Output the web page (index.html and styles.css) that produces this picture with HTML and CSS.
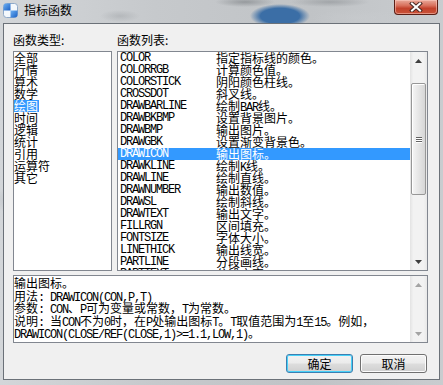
FILE: index.html
```html
<!DOCTYPE html>
<html lang="zh-CN">
<head>
  <meta charset="UTF-8">
  <title>指标函数</title>
  <link rel="stylesheet" href="styles.css">
</head>
<body>
  <div class="window">
    <div class="titlebar">
      <svg class="app-icon" width="15" height="15" viewBox="0 0 15 15">
        <defs>
          <linearGradient id="blue" x1="0" y1="0" x2="1" y2="1">
            <stop offset="0" stop-color="#6fb2f4"/>
            <stop offset="1" stop-color="#1a5fc4"/>
          </linearGradient>
        </defs>
        <rect x="0.5" y="0.5" width="14" height="14" rx="3" fill="#f4f8fc" stroke="#8fa9c8"/>
        <path d="M0.5 7.5 V3.5 A3 3 0 0 1 3.5 0.5 H7.5 V7.5 Z" fill="url(#blue)"/>
        <path d="M7.5 7.5 H14.5 V11.5 A3 3 0 0 1 11.5 14.5 H7.5 Z" fill="url(#blue)"/>
      </svg>
      <span class="title">指标函数</span>
      <div class="close-btn">
        <svg width="14" height="10" viewBox="0 0 14 10">
          <path d="M3 1.5 L11 8.5 M11 1.5 L3 8.5" stroke="#4a2a24" stroke-width="4" stroke-linecap="square"/>
          <path d="M3 1.5 L11 8.5 M11 1.5 L3 8.5" stroke="#fff" stroke-width="2" stroke-linecap="square"/>
        </svg>
      </div>
    </div>

    <div class="client">
      <div class="lists">
        <div class="col col-type">
          <div class="label">函数类型:</div>
          <div class="listbox type-list">
            <div class="item">全部</div>
            <div class="item">行情</div>
            <div class="item">算术</div>
            <div class="item">数学</div>
            <div class="item selected">绘图</div>
            <div class="item">时间</div>
            <div class="item">逻辑</div>
            <div class="item">统计</div>
            <div class="item">引用</div>
            <div class="item">运算符</div>
            <div class="item">其它</div>
          </div>
        </div>

        <div class="col col-func">
          <div class="label">函数列表:</div>
          <div class="listbox func-list">
            <div class="rows">
              <div class="row"><span class="name">COLOR</span><span class="desc">指定指标线的颜色。</span></div>
              <div class="row"><span class="name">COLORRGB</span><span class="desc">计算颜色值。</span></div>
              <div class="row"><span class="name">COLORSTICK</span><span class="desc">阴阳颜色柱线。</span></div>
              <div class="row"><span class="name">CROSSDOT</span><span class="desc">斜叉线。</span></div>
              <div class="row"><span class="name">DRAWBARLINE</span><span class="desc">绘制<span class="en">BAR</span>线。</span></div>
              <div class="row"><span class="name">DRAWBKBMP</span><span class="desc">设置背景图片。</span></div>
              <div class="row"><span class="name">DRAWBMP</span><span class="desc">输出图片。</span></div>
              <div class="row"><span class="name">DRAWGBK</span><span class="desc">设置渐变背景色。</span></div>
              <div class="row selected"><span class="name">DRAWICON</span><span class="desc">输出图标。</span></div>
              <div class="row"><span class="name">DRAWKLINE</span><span class="desc">绘制<span class="en">K</span>线。</span></div>
              <div class="row"><span class="name">DRAWLINE</span><span class="desc">绘制直线。</span></div>
              <div class="row"><span class="name">DRAWNUMBER</span><span class="desc">输出数值。</span></div>
              <div class="row"><span class="name">DRAWSL</span><span class="desc">绘制斜线。</span></div>
              <div class="row"><span class="name">DRAWTEXT</span><span class="desc">输出文字。</span></div>
              <div class="row"><span class="name">FILLRGN</span><span class="desc">区间填充。</span></div>
              <div class="row"><span class="name">FONTSIZE</span><span class="desc">字体大小。</span></div>
              <div class="row"><span class="name">LINETHICK</span><span class="desc">输出线宽。</span></div>
              <div class="row"><span class="name">PARTLINE</span><span class="desc">分段画线。</span></div>
              <div class="row"><span class="name">PARTTEXT</span><span class="desc">分段文字。</span></div>
            </div>
            <div class="scrollbar">
              <div class="sb-btn">
                <svg width="7" height="4" viewBox="0 0 7 4"><polygon points="0,4 3.5,0 7,4" class="arrow"/></svg>
              </div>
              <div class="sb-space sb-before"></div>
              <div class="sb-thumb"><span></span><span></span><span></span></div>
              <div class="sb-space sb-after"></div>
              <div class="sb-btn">
                <svg width="7" height="4" viewBox="0 0 7 4"><polygon points="0,0 3.5,4 7,0" class="arrow"/></svg>
              </div>
            </div>
          </div>
        </div>
      </div>

      <div class="info">
        <div class="info-text">
          <div>输出图标。</div>
          <div>用法<span class="en">: DRAWICON(CON,P,T)</span></div>
          <div>参数<span class="en">: CON</span>、<span class="en">P</span>可为变量或常数，<span class="en">T</span>为常数。</div>
          <div>说明<span class="en">: </span>当<span class="en">CON</span>不为<span class="en">0</span>时，在<span class="en">P</span>处输出图标<span class="en">T</span>。<span class="en">T</span>取值范围为<span class="en">1</span>至<span class="en">15</span>。例如，</div>
          <div><span class="en">DRAWICON(CLOSE/REF(CLOSE,1)&gt;=1.1,LOW,1)</span>。</div>
        </div>
        <div class="scrollbar disabled">
          <div class="sb-btn">
            <svg width="7" height="4" viewBox="0 0 7 4"><polygon points="0,4 3.5,0 7,4" class="arrow"/></svg>
          </div>
          <div class="sb-space"></div>
          <div class="sb-btn">
            <svg width="7" height="4" viewBox="0 0 7 4"><polygon points="0,0 3.5,4 7,0" class="arrow"/></svg>
          </div>
        </div>
      </div>

      <div class="buttons">
        <button class="btn default">确定</button>
        <button class="btn">取消</button>
      </div>
    </div>
  </div>
</body>
</html>
```

FILE: styles.css
```css
/* Reset */
* {
  margin: 0;
  padding: 0;
  box-sizing: border-box;
}

body {
  width: 443px;
  height: 385px;
  overflow: hidden;
  font-family: "Noto Sans CJK SC", "Liberation Sans", sans-serif;
  font-size: 12px;
  color: #000;
  background:
    radial-gradient(ellipse 30px 14px at 20px 200px, rgba(170, 176, 182, 0.6), transparent),
    linear-gradient(to right, #d3d6d9, #c6c9cc 35%, #c0c3c6 70%, #c9cccf);
}

/* Window frame */
.window {
  display: flex;
  flex-direction: column;
  height: 385px;
}

.titlebar {
  height: 23px;
  display: flex;
  align-items: flex-start;
  background:
    radial-gradient(ellipse 30px 12px at 280px 16px, #3b6ea6 65%, rgba(59, 110, 166, 0) 100%),
    radial-gradient(ellipse 30px 5px at 245px 2px, rgba(120, 124, 128, 0.6), transparent),
    radial-gradient(ellipse 40px 5px at 330px 2px, rgba(130, 134, 138, 0.5), transparent),
    radial-gradient(ellipse 20px 6px at 120px 16px, rgba(150, 154, 158, 0.4), transparent),
    radial-gradient(ellipse 50px 8px at 360px 18px, rgba(200, 203, 206, 0.6), transparent);
}

.app-icon {
  margin: 3px 0 0 3px;
  flex-shrink: 0;
}

.title {
  margin: 3px 0 0 6px;
  line-height: 14px;
  font-size: 12px;
}

.close-btn {
  margin-left: auto;
  margin-right: 5px;
  width: 44px;
  height: 15px;
  display: flex;
  align-items: center;
  justify-content: center;
  border: 1px solid #5b1f16;
  border-top: none;
  border-radius: 0 0 4px 4px;
  background: linear-gradient(#e9a99a, #d8705c 40%, #c2412b 60%, #c9543a);
  box-shadow: inset 0 0 0 1px rgba(255, 210, 200, 0.5);
}

/* Client area */
.client {
  margin: 0 3px;
  height: 357px;
  border: 1px solid #6b7178;
  background: #f0f0f0;
  padding: 10px 11px 0 9px;
}

.lists {
  display: flex;
  gap: 5px;
}

.col-type {
  width: 99px;
}

.col-func {
  flex: 1;
}

.label {
  height: 12px;
  line-height: 12px;
  margin-bottom: 5px;
  white-space: nowrap;
}

.listbox {
  height: 220px;
  border: 1px solid #828790;
  background: #fff;
  overflow: hidden;
}

/* Type list */
.type-list .item {
  width: max-content;
  height: 12px;
  line-height: 12px;
  padding-right: 1px;
}

.item.selected,
.row.selected {
  background: #3399ff;
  color: #fff;
}

/* Function list */
.func-list {
  display: flex;
}

.rows {
  flex: 1;
  overflow: hidden;
}

.row {
  display: flex;
  height: 12px;
  line-height: 12px;
  padding-left: 2px;
  white-space: nowrap;
}

.name,
.en {
  font-family: "Liberation Mono", monospace;
  font-size: 12px;
  letter-spacing: -1.2px;
}

.name {
  width: 96px;
  flex-shrink: 0;
}

/* Scrollbar */
.scrollbar {
  width: 17px;
  flex-shrink: 0;
  display: flex;
  flex-direction: column;
  background: linear-gradient(to right, #e3e3e3, #f2f2f2 20%, #f2f2f2 80%, #e8e8e8);
}

.sb-btn {
  height: 17px;
  display: flex;
  align-items: center;
  justify-content: center;
}

.arrow {
  fill: #3f3f3f;
}

.disabled .arrow {
  fill: #a3a3a3;
}

.sb-space {
  flex: 1;
}

.sb-before {
  flex: 0 0 14px;
}

.sb-thumb {
  height: 112px;
  margin: 0 1px;
  border: 1px solid #979797;
  border-radius: 2px;
  background: linear-gradient(to right, #f6f6f6, #e6e6e6 50%, #d6d6d6);
  box-shadow: inset 1px 1px 0 #fff;
  display: flex;
  flex-direction: column;
  align-items: center;
  justify-content: center;
  gap: 1px;
}

.sb-thumb span {
  width: 6px;
  height: 1px;
  background: #636363;
  box-shadow: 0 1px 0 #fff;
}

/* Description */
.info {
  margin-top: 4px;
  height: 68px;
  display: flex;
  border: 1px solid #828790;
  background: #fff;
}

.info-text {
  flex: 1;
  padding-top: 1px;
  line-height: 12.5px;
  white-space: nowrap;
  overflow: hidden;
}

.info-text div {
  height: 12.5px;
}

/* Buttons */
.buttons {
  display: flex;
  justify-content: flex-end;
  gap: 7px;
  margin-top: 11px;
  padding-right: 1px;
}

.btn {
  width: 67px;
  height: 19px;
  font-family: "Noto Sans CJK SC", sans-serif;
  font-size: 12px;
  line-height: 15px;
  color: #000;
  border: 1px solid #707070;
  border-radius: 3px;
  background: linear-gradient(#f2f2f2, #ebebeb 48%, #dddddd 52%, #cfcfcf);
  box-shadow: inset 0 0 0 1px #fcfcfc;
}

.btn.default {
  border-color: #3c7fb1;
  box-shadow: inset 0 0 0 1px #48d1f8;
}
```
